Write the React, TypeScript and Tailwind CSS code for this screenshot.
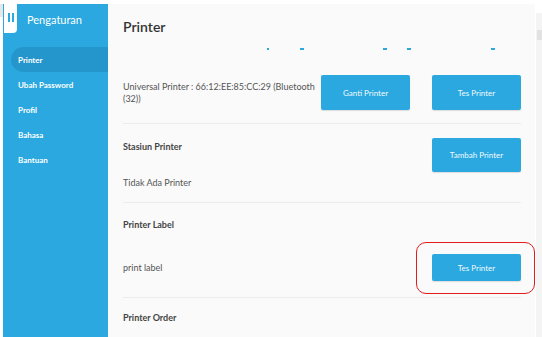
import React from "react";

const menu = ["Ubah Password", "Profil", "Bahasa", "Bantuan"];

function BlueButton({ label, h = "h-[35px]" }: { label: string; h?: string }) {
  return (
    <button
      className={`w-[89px] ${h} bg-[#2aa8df] rounded-[2px] text-[#f2fbff] text-[8px] shadow-[0_1px_1px_rgba(0,0,0,0.12)]`}
    >
      {label}
    </button>
  );
}

export default function App() {
  return (
    <div
      className="relative w-[542px] h-[337px] bg-white overflow-hidden flex pt-[4px] pl-[3px]"
      style={{ fontFamily: "Lato, 'Open Sans', sans-serif" }}
    >
      {/* tiny grey edge behind the toggle */}
      <div className="absolute left-0 top-[4px] w-[4px] h-[13px] bg-[#e6e6e6]" />

      {/* Sidebar */}
      <aside className="relative w-[105px] bg-[#2aa8df] flex flex-col">
        <div className="absolute left-[1px] top-0 w-[13px] h-[29px] bg-white rounded-br-[4px] flex items-center justify-center gap-[2px] pb-[3px]">
          <span className="w-[2px] h-[9px] bg-[#2aa8df]" />
          <span className="w-[2px] h-[9px] bg-[#2aa8df]" />
        </div>
        <div className="pl-[24px] pt-[9px] h-[43px] text-white text-[11px] leading-[14px]">
          Pengaturan
        </div>
        <div className="ml-[8px] h-[25px] rounded-l-full bg-[#2496cb] flex items-center pl-[7px] text-white text-[8px] font-bold">
          Printer
        </div>
        {menu.map((m) => (
          <div key={m} className="h-[25px] flex items-center pl-[15px] text-white text-[8px] font-bold">
            {m}
          </div>
        ))}
      </aside>

      {/* Main panel */}
      <main className="w-[427px] bg-[#fafafa] pl-[15px] pr-[14px] flex flex-col text-[#555]">
        <div className="pt-[13px] text-[14px] leading-[20px] font-semibold text-[#333]">Printer</div>

        {/* clipped content peeking above */}
        <div className="relative h-[2px] mt-[11px]">
          <span className="absolute left-[144px] w-[2px] h-[2px] bg-[#2aa8df]" />
          <span className="absolute left-[177px] w-[4px] h-[2px] bg-[#2aa8df]" />
          <span className="absolute left-[260px] w-[4px] h-[2px] bg-[#2aa8df]" />
          <span className="absolute left-[284px] w-[4px] h-[2px] bg-[#2aa8df]" />
          <span className="absolute left-[368px] w-[4px] h-[2px] bg-[#2aa8df]" />
        </div>

        <div className="mt-[25px] flex items-center">
          <div className="w-[198px] text-[9px] leading-[12px]">
            Universal Printer : 66:12:EE:85:CC:29 (Bluetooth (32))
          </div>
          <div className="ml-auto flex gap-[22px]">
            <BlueButton label="Ganti Printer" />
            <BlueButton label="Tes Printer" />
          </div>
        </div>

        <div className="mt-[13px] border-t border-[#ececec]" />

        <div className="mt-[14px] pb-[13px] flex justify-between items-start">
          <div className="pt-[3px] flex flex-col gap-[24px] text-[9px] leading-[12px]">
            <span className="font-bold text-[#444]">Stasiun Printer</span>
            <span>Tidak Ada Printer</span>
          </div>
          <BlueButton label="Tambah Printer" h="h-[34px]" />
        </div>

        <div className="border-t border-[#ececec]" />

        <div className="pt-[16px] text-[9px] leading-[12px] font-bold text-[#444]">Printer Label</div>
        <div className="mt-[23px] flex items-center justify-between">
          <span className="text-[9px] leading-[12px]">print label</span>
          <BlueButton label="Tes Printer" h="h-[27px]" />
        </div>

        <div className="mt-[16px] border-t border-[#ececec]" />

        <div className="pt-[14px] text-[9px] leading-[12px] font-bold text-[#444]">Printer Order</div>
      </main>

      {/* scrollbar strip */}
      <div className="relative flex-1 bg-white">
        <div className="absolute left-[1px] top-[9px] bottom-0 w-[6px] bg-[#f4f4f4]" />
        <div className="absolute left-[2px] top-[26px] w-[5px] h-[10px] bg-[#e2e2e2]" />
      </div>

      {/* red highlight */}
      <div className="absolute left-[416px] top-[242px] w-[119px] h-[52px] border-[1.5px] border-[#e21b1b] rounded-[10px]" />
    </div>
  );
}
